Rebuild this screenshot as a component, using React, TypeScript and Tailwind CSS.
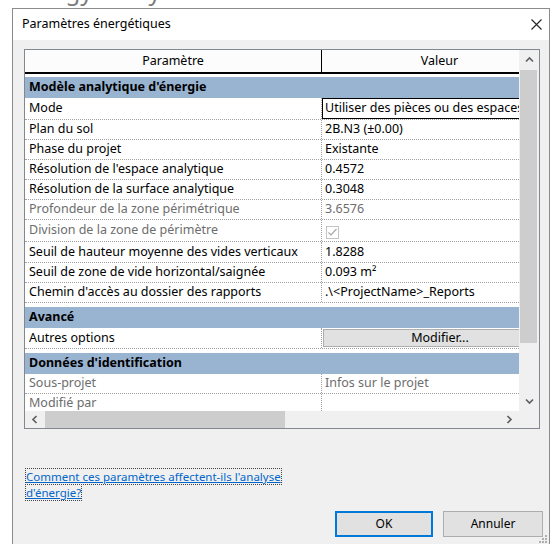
import React from 'react';

type Row =
  | { kind: 'group'; label: string; pad: string }
  | {
      kind: 'item';
      name: string;
      value?: string;
      h: string;
      muted?: boolean;
      edit?: boolean;
      check?: boolean;
      button?: boolean;
    };

const rows: Row[] = [
  { kind: 'group', label: "Modèle analytique d'énergie", pad: 'pt-[3px]' },
  { kind: 'item', name: 'Mode', value: 'Utiliser des pièces ou des espaces', h: 'h-[22px]', edit: true },
  { kind: 'item', name: 'Plan du sol', value: '2B.N3 (±0.00)', h: 'h-[20px]' },
  { kind: 'item', name: 'Phase du projet', value: 'Existante', h: 'h-[20px]' },
  { kind: 'item', name: "Résolution de l'espace analytique", value: '0.4572', h: 'h-[20px]' },
  { kind: 'item', name: 'Résolution de la surface analytique', value: '0.3048', h: 'h-[20px]' },
  { kind: 'item', name: 'Profondeur de la zone périmétrique', value: '3.6576', h: 'h-[20px]', muted: true },
  { kind: 'item', name: 'Division de la zone de périmètre', h: 'h-[22px]', muted: true, check: true },
  { kind: 'item', name: 'Seuil de hauteur moyenne des vides verticaux', value: '1.8288', h: 'h-[21px]' },
  { kind: 'item', name: 'Seuil de zone de vide horizontal/saignée', value: '0.093 m²', h: 'h-[20px]' },
  { kind: 'item', name: "Chemin d'accès au dossier des rapports", value: '.\\<ProjectName>_Reports', h: 'h-[20px]' },
  { kind: 'group', label: 'Avancé', pad: 'pt-[4px]' },
  { kind: 'item', name: 'Autres options', h: 'h-[21px]', button: true },
  { kind: 'group', label: "Données d'identification", pad: 'pt-[4px]' },
  { kind: 'item', name: 'Sous-projet', value: 'Infos sur le projet', h: 'h-[20px]', muted: true },
  { kind: 'item', name: 'Modifié par', value: '', h: 'h-[20px]', muted: true },
];

const Chevron = ({ dir }: { dir: 'up' | 'down' | 'left' | 'right' }) => {
  const pts = {
    up: '1,5.5 4.5,2 8,5.5',
    down: '1,2.5 4.5,6 8,2.5',
    left: '5.5,1 2,4.5 5.5,8',
    right: '2.5,1 6,4.5 2.5,8',
  }[dir];
  return (
    <svg width="9" height="9" viewBox="0 0 9 9">
      <polyline points={pts} fill="none" stroke="#606060" strokeWidth="1.7" />
    </svg>
  );
};

const GridRow = ({ row }: { row: Row }) => {
  if (row.kind === 'group') {
    return (
      <div className={`${row.pad} bg-white`}>
        <div className="h-[21px] bg-[#99b4d1] pl-[4px] flex items-center font-bold">{row.label}</div>
      </div>
    );
  }
  const tone = row.muted ? 'text-[#6d6d6d]' : 'text-black';
  return (
    <div className={`${row.h} flex border-b border-dotted border-[#a0a0a0]`}>
      <div className={`w-[297px] pl-[4px] flex items-center whitespace-nowrap overflow-hidden border-r border-dotted border-[#a0a0a0] ${tone}`}>
        {row.name}
      </div>
      {row.edit && (
        <div className="flex-1 border border-black pl-[2px] flex items-center whitespace-nowrap overflow-hidden">
          {row.value}
        </div>
      )}
      {row.check && (
        <div className="flex-1 pl-[4px] pt-[3px] flex items-center">
          <div className="w-[13px] h-[13px] border border-[#c4c4c4] bg-white flex items-center justify-center">
            <svg width="11" height="11" viewBox="0 0 11 11">
              <polyline points="1.5,5.5 4,8 9.5,2" fill="none" stroke="#a8a8a8" strokeWidth="1.2" />
            </svg>
          </div>
        </div>
      )}
      {row.button && (
        <div className="flex-1 pl-[1px] pt-[1px] pb-[1px]">
          <div className="h-full bg-[#e1e1e1] border border-[#adadad] flex items-center justify-center">Modifier...</div>
        </div>
      )}
      {!row.edit && !row.check && !row.button && (
        <div className={`flex-1 pl-[3px] flex items-center whitespace-nowrap overflow-hidden ${tone}`}>{row.value}</div>
      )}
    </div>
  );
};

export default function App() {
  return (
    <div className="w-[557px] h-[544px] overflow-hidden bg-white font-['Noto_Sans','Open_Sans',sans-serif] text-[12.5px] text-black">
      {/* page behind the dialog */}
      <div className="h-[8px] overflow-hidden pl-[14px]">
        <div className="-mt-[22px] text-[24px] leading-[26px] text-[#7a7a7a] whitespace-nowrap">Energy Analysis</div>
      </div>

      <div className="relative ml-[12px] w-[538px] h-[539px] border border-[#8b8b8b] bg-[#f0f0f0] flex flex-col">
        <div className="h-[31px] bg-white flex items-center justify-between pl-[9px] pr-[7px]">
          <span>Paramètres énergétiques</span>
          <svg width="11" height="11" viewBox="0 0 11 11">
            <path d="M0.5 0.5 L10.5 10.5 M10.5 0.5 L0.5 10.5" stroke="#222" strokeWidth="1.1" />
          </svg>
        </div>

        <div className="flex-1 pl-[11px] pt-[9px]">
          <div className="w-[516px] border border-[#828790] bg-white">
            <div className="flex h-[361px]">
              <div className="w-[494px] overflow-hidden">
                <div className="w-[532px]">
                  <div className="h-[24px] flex border-b-2 border-black bg-[#fcfcfc]">
                    <div className="w-[297px] border-r border-black flex items-center justify-center">Paramètre</div>
                    <div className="flex-1 flex items-center justify-center">Valeur</div>
                  </div>
                  {rows.map((r, i) => (
                    <GridRow key={i} row={r} />
                  ))}
                </div>
              </div>
              <div className="w-[20px] bg-[#f0f0f0] flex flex-col">
                <div className="h-[20px] flex items-center justify-center">
                  <Chevron dir="up" />
                </div>
                <div className="h-[273px] w-[17px] ml-[1px] bg-[#cdcdcd]" />
                <div className="flex-1" />
                <div className="h-[20px] flex items-center justify-center">
                  <Chevron dir="down" />
                </div>
              </div>
            </div>
            <div className="flex h-[17px] bg-[#f0f0f0]">
              <div className="w-[20px] flex items-center justify-center">
                <Chevron dir="left" />
              </div>
              <div className="w-[240px] bg-[#cdcdcd]" />
              <div className="flex-1" />
              <div className="w-[20px] flex items-center justify-center">
                <Chevron dir="right" />
              </div>
              <div className="w-[20px]" />
            </div>
          </div>

          <div className="mt-[40px] pl-[1px] text-[11.5px] leading-[16px]">
            <span className="border border-dotted border-[#444] box-decoration-clone text-[#0066cc] underline">
              Comment ces paramètres affectent-ils l'analyse
              <br />
              d'énergie?
            </span>
          </div>

          <div className="w-[519px] mt-[10px] flex justify-end gap-[10px] text-[12px]">
            <div className="w-[98px] h-[26px] border-2 border-[#0078d7] bg-[#e1e1e1] flex items-center justify-center">OK</div>
            <div className="w-[100px] h-[26px] border border-[#adadad] bg-[#e1e1e1] flex items-center justify-center">Annuler</div>
          </div>
        </div>

        {/* size grip */}
        <svg className="absolute right-[1px] bottom-[2px]" width="10" height="10" viewBox="0 0 10 10">
          <rect x="7" y="1" width="2" height="2" fill="#b0b0b0" />
          <rect x="4" y="4" width="2" height="2" fill="#b0b0b0" />
          <rect x="7" y="4" width="2" height="2" fill="#b0b0b0" />
          <rect x="1" y="7" width="2" height="2" fill="#b0b0b0" />
          <rect x="4" y="7" width="2" height="2" fill="#b0b0b0" />
          <rect x="7" y="7" width="2" height="2" fill="#b0b0b0" />
        </svg>
      </div>
    </div>
  );
}
